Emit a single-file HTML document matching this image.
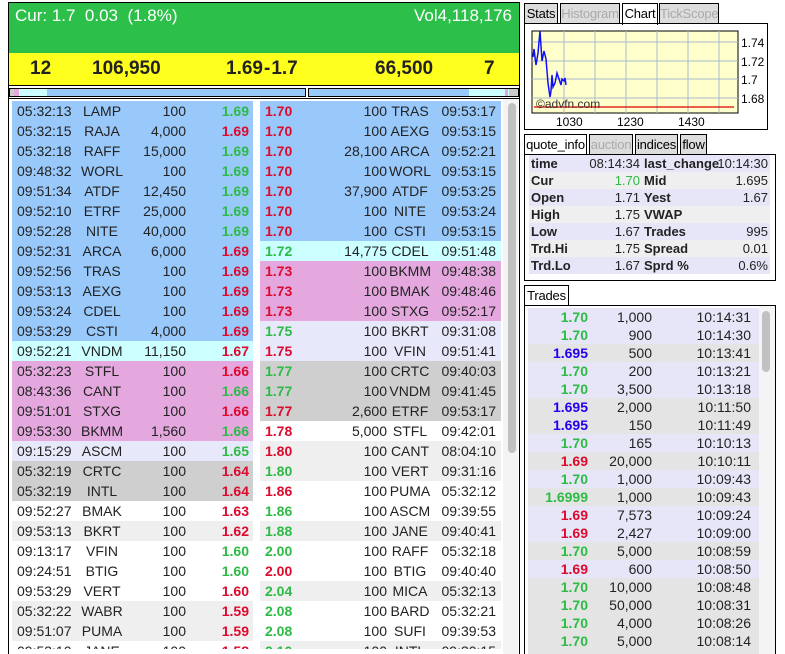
<!DOCTYPE html>
<html><head><meta charset="utf-8"><style>
*{margin:0;padding:0;box-sizing:border-box}
html,body{width:785px;height:654px;overflow:hidden}
body{background:#fff;font-family:"Liberation Sans",Arial,sans-serif;position:relative;color:#222}
.a{position:absolute}
.g{color:#2dbb45}.r{color:#dd0a2e}.b{color:#2200ee}
.row{position:absolute;height:20px;font-size:14px;line-height:20px}
.row span{position:absolute;white-space:nowrap}
.bl{background:#99c8fb}.cy{background:#ccffff}.pk{background:#e4a8df}.lv{background:#e8e8fb}.gy{background:#cfcfcf}.wh{background:#fff}.lg{background:#efefef}
.pr{font-weight:bold}
.tab{position:absolute;top:3px;height:21px;border:1px solid #000;border-bottom:none;font-size:13px;line-height:20px;text-align:center;background:#ddd;color:#aaa;overflow:hidden;white-space:nowrap;letter-spacing:-0.2px}
.qr{position:absolute;left:529px;width:241px;height:17px;font-size:13px;line-height:17px}
.qr span{position:absolute;white-space:nowrap}
.tr{position:absolute;left:528px;width:231px;height:18px;font-size:14px;line-height:18px}
.tr span{position:absolute;white-space:nowrap}
</style></head><body>
<div class="a" style="left:8px;top:2px;width:512px;height:652px;border:1px solid #000;border-bottom:none"></div>
<div class="a" style="left:9px;top:3px;width:510px;height:50px;background:#2cc04a"></div>
<div class="a" style="left:15px;top:6px;font-size:17px;color:#fff">Cur: 1.7&nbsp; 0.03&nbsp; (1.8%)</div>
<div class="a" style="right:273px;top:6px;font-size:17px;color:#fff">Vol4,118,176</div>
<div class="a" style="left:9px;top:53px;width:510px;height:33px;background:#ffff1e;border-bottom:1px solid #000"></div>
<div class="a" style="top:58px;font-size:19px;font-weight:bold;left:30px">12</div>
<div class="a" style="top:58px;font-size:19px;font-weight:bold;left:92px">106,950</div>
<div class="a" style="top:58px;font-size:19px;font-weight:bold;left:226px">1.69<span style="margin:0 1px">-</span>1.7</div>
<div class="a" style="top:58px;font-size:19px;font-weight:bold;left:375px">66,500</div>
<div class="a" style="top:58px;font-size:19px;font-weight:bold;left:484px">7</div>
<div class="a" style="left:9px;top:88px;width:297px;height:9px;border:1px solid #000;background:#ccffff"></div>
<div class="a" style="left:10px;top:89px;width:4px;height:7px;background:#ccc"></div>
<div class="a" style="left:14px;top:89px;width:5px;height:7px;background:#e4a8df"></div>
<div class="a" style="left:47px;top:89px;width:258px;height:7px;background:#99c8fb"></div>
<div class="a" style="left:308px;top:88px;width:211px;height:9px;border:1px solid #000;background:#ccffff"></div>
<div class="a" style="left:309px;top:89px;width:160px;height:7px;background:#99c8fb"></div>
<div class="a" style="left:505px;top:89px;width:3px;height:7px;background:#e4a8df"></div>
<div class="a" style="left:509px;top:89px;width:9px;height:7px;background:#ccc"></div>
<div class="a" style="left:9px;top:98px;width:510px;height:1px;background:#000"></div>
<div class="a" style="left:503px;top:99px;width:15px;height:555px;background:#f4f4f4"></div>
<div class="a" style="left:508px;top:103px;width:8px;height:350px;background:#c1c1c1;border-radius:4px"></div>
<div class="a" style="left:9px;top:99px;width:494px;height:550px;overflow:hidden"><div id="L" class="a" style="left:-9px;top:-99px;width:785px;height:654px"></div></div>

<div class="tab" style="left:524px;width:34px;color:#000">Stats</div>
<div class="tab" style="left:560px;width:60px">Histogram</div>
<div class="tab" style="left:622px;width:36px;background:#fff;color:#000;height:22px">Chart</div>
<div class="tab" style="left:659px;width:60px">TickScope</div>
<div class="a" style="left:524px;top:23px;width:244px;height:107px;border:1px solid #000"></div>
<svg class="a" style="left:524px;top:23px" width="243" height="106">
<rect x="8" y="8" width="206" height="82" fill="#ffffcc" stroke="#000"/>
<g stroke="#aab8cc" stroke-width="1">
<line x1="40" y1="8" x2="40" y2="90"/><line x1="71" y1="8" x2="71" y2="90"/><line x1="102" y1="8" x2="102" y2="90"/><line x1="133" y1="8" x2="133" y2="90"/><line x1="164" y1="8" x2="164" y2="90"/><line x1="195" y1="8" x2="195" y2="90"/>
<line x1="8" y1="19" x2="214" y2="19"/><line x1="8" y1="38" x2="214" y2="38"/><line x1="8" y1="56" x2="214" y2="56"/><line x1="8" y1="75" x2="214" y2="75"/>
</g>
<line x1="10" y1="84" x2="210" y2="84" stroke="#d00" stroke-width="1.2"/>
<polyline fill="none" stroke="#1010ff" stroke-width="1.5" points="9,34 10,26 12,42 14,30 16,8 18,38 20,28 22,36 23,48 24,60 26,74 27,68 28,52 29,64 31,60 33,50 35,56 37,62 38,56 40,58 41,55 42,62"/>
<text x="12" y="85" font-size="12" fill="#333" font-family="Liberation Sans">©advfn.com</text>
<g font-size="12" fill="#000" font-family="Liberation Sans"><text x="217" y="24">1.74</text><text x="217" y="43">1.72</text><text x="217" y="61">1.7</text><text x="217" y="80">1.68</text>
<text x="32" y="103">1030</text><text x="93" y="103">1230</text><text x="154" y="103">1430</text></g>
</svg>

<div class="tab" style="left:524px;top:134px;width:63px;background:#fff;color:#000;height:21px">quote_info</div>
<div class="tab" style="left:589px;top:134px;width:44px">auction</div>
<div class="tab" style="left:635px;top:134px;width:43px;color:#000">indices</div>
<div class="tab" style="left:680px;top:134px;width:27px;color:#000">flow</div>
<div class="a" style="left:524px;top:154px;width:252px;height:127px;border:1px solid #000"></div>
<div id="Q"></div>

<div class="tab" style="left:524px;top:285px;width:45px;background:#fff;color:#000;height:21px">Trades</div>
<div class="a" style="left:524px;top:305px;width:252px;height:349px;border:1px solid #000;border-bottom:none"></div>
<div class="a" style="left:759px;top:306px;width:16px;height:348px;background:#f4f4f4"></div>
<div class="a" style="left:762px;top:311px;width:8px;height:61px;background:#c1c1c1;border-radius:4px"></div>
<div class="a" style="left:525px;top:306px;width:234px;height:348px;overflow:hidden"><div id="T" class="a" style="left:-525px;top:-306px;width:785px;height:654px"></div></div>
<script>
var L=[["bl","05:32:13","LAMP","100","g1.69"],["bl","05:32:15","RAJA","4,000","r1.69"],["bl","05:32:18","RAFF","15,000","g1.69"],["bl","09:48:32","WORL","100","g1.69"],["bl","09:51:34","ATDF","12,450","g1.69"],["bl","09:52:10","ETRF","25,000","g1.69"],["bl","09:52:28","NITE","40,000","g1.69"],["bl","09:52:31","ARCA","6,000","r1.69"],["bl","09:52:56","TRAS","100","r1.69"],["bl","09:53:13","AEXG","100","r1.69"],["bl","09:53:24","CDEL","100","r1.69"],["bl","09:53:29","CSTI","4,000","r1.69"],["cy","09:52:21","VNDM","11,150","r1.67"],["pk","05:32:23","STFL","100","r1.66"],["pk","08:43:36","CANT","100","g1.66"],["pk","09:51:01","STXG","100","r1.66"],["pk","09:53:30","BKMM","1,560","g1.66"],["lv","09:15:29","ASCM","100","g1.65"],["gy","05:32:19","CRTC","100","r1.64"],["gy","05:32:19","INTL","100","r1.64"],["wh","09:52:27","BMAK","100","r1.63"],["lg","09:53:13","BKRT","100","r1.62"],["wh","09:13:17","VFIN","100","g1.60"],["wh","09:24:51","BTIG","100","g1.60"],["wh","09:53:29","VERT","100","r1.60"],["lg","05:32:22","WABR","100","r1.59"],["lg","09:51:07","PUMA","100","r1.59"],["wh","09:53:10","JANE","100","r1.58"]];
var R=[["bl","r1.70","100","TRAS","09:53:17"],["bl","r1.70","100","AEXG","09:53:15"],["bl","r1.70","28,100","ARCA","09:52:21"],["bl","r1.70","100","WORL","09:53:15"],["bl","r1.70","37,900","ATDF","09:53:25"],["bl","r1.70","100","NITE","09:53:24"],["bl","r1.70","100","CSTI","09:53:15"],["cy","g1.72","14,775","CDEL","09:51:48"],["pk","r1.73","100","BKMM","09:48:38"],["pk","r1.73","100","BMAK","09:48:46"],["pk","r1.73","100","STXG","09:52:17"],["lv","g1.75","100","BKRT","09:31:08"],["lv","r1.75","100","VFIN","09:51:41"],["gy","g1.77","100","CRTC","09:40:03"],["gy","g1.77","100","VNDM","09:41:45"],["gy","r1.77","2,600","ETRF","09:53:17"],["wh","r1.78","5,000","STFL","09:42:01"],["lg","r1.80","100","CANT","08:04:10"],["lg","g1.80","100","VERT","09:31:16"],["wh","r1.86","100","PUMA","05:32:12"],["wh","g1.86","100","ASCM","09:39:55"],["lg","g1.88","100","JANE","09:40:41"],["wh","g2.00","100","RAFF","05:32:18"],["wh","r2.00","100","BTIG","09:40:40"],["lg","g2.04","100","MICA","05:32:13"],["wh","g2.08","100","BARD","05:32:21"],["wh","g2.08","100","SUFI","09:39:53"],["lg","g2.10","100","INTL","09:30:15"]];
var s="";
L.forEach(function(d,i){var t=101+i*20;s+='<div class="row '+d[0]+'" style="left:12px;top:'+t+'px;width:241px"><span style="left:5px">'+d[1]+'</span><span style="left:60px;width:60px;text-align:center">'+d[2]+'</span><span style="right:67px">'+d[3]+'</span><span class="pr '+(d[4][0])+'" style="right:4px">'+d[4].slice(1)+'</span></div>'});
R.forEach(function(d,i){var t=101+i*20;s+='<div class="row '+d[0]+'" style="left:260px;top:'+t+'px;width:241px"><span class="pr '+d[1][0]+'" style="left:5px">'+d[1].slice(1)+'</span><span style="right:114px">'+d[2]+'</span><span style="left:118px;width:64px;text-align:center">'+d[3]+'</span><span style="right:5px">'+d[4]+'</span></div>'});
document.getElementById("L").innerHTML=s;
var Q=[["lv","time","08:14:34","","last_change","10:14:30"],["lg","Cur","1.70","g","Mid","1.695"],["lv","Open","1.71","","Yest","1.67"],["lg","High","1.75","","VWAP",""],["lv","Low","1.67","","Trades","995"],["lg","Trd.Hi","1.75","","Spread","0.01"],["lv","Trd.Lo","1.67","","Sprd %","0.6%"]];
var q="";Q.forEach(function(d,i){q+='<div class="qr" style="top:'+(155+i*17)+'px;background:'+(d[0]=="lv"?"#e6e6f8":"#efefef")+'"><span style="left:2px;font-weight:bold">'+d[1]+'</span><span class="'+(d[3]?"g":"")+'" style="right:130px">'+d[2]+'</span><span style="left:115px;font-weight:bold">'+d[4]+'</span><span style="right:2px">'+d[5]+'</span></div>'});
document.getElementById("Q").outerHTML=q;
var T=[["l","g1.70","1,000","10:14:31"],["l","g1.70","900","10:14:30"],["d","b1.695","500","10:13:41"],["l","g1.70","200","10:13:21"],["l","g1.70","3,500","10:13:18"],["d","b1.695","2,000","10:11:50"],["d","b1.695","150","10:11:49"],["l","g1.70","165","10:10:13"],["d","r1.69","20,000","10:10:11"],["l","g1.70","1,000","10:09:43"],["d","g1.6999","1,000","10:09:43"],["l","r1.69","7,573","10:09:24"],["l","r1.69","2,427","10:09:00"],["d","g1.70","5,000","10:08:59"],["l","r1.69","600","10:08:50"],["d","g1.70","10,000","10:08:48"],["d","g1.70","50,000","10:08:31"],["d","g1.70","4,000","10:08:26"],["d","g1.70","5,000","10:08:14"],["d","g1.70","1,000","10:08:01"]];
var t="";T.forEach(function(d,i){t+='<div class="tr" style="top:'+(308+i*18)+'px;background:'+(d[0]=="l"?"#e6e6f8":"#e4e4e4")+'"><span class="pr '+d[1][0]+'" style="right:171px">'+d[1].slice(1)+'</span><span style="right:107px">'+d[2]+'</span><span style="right:8px">'+d[3]+'</span></div>'});
document.getElementById("T").innerHTML=t;
</script>
</body></html>
